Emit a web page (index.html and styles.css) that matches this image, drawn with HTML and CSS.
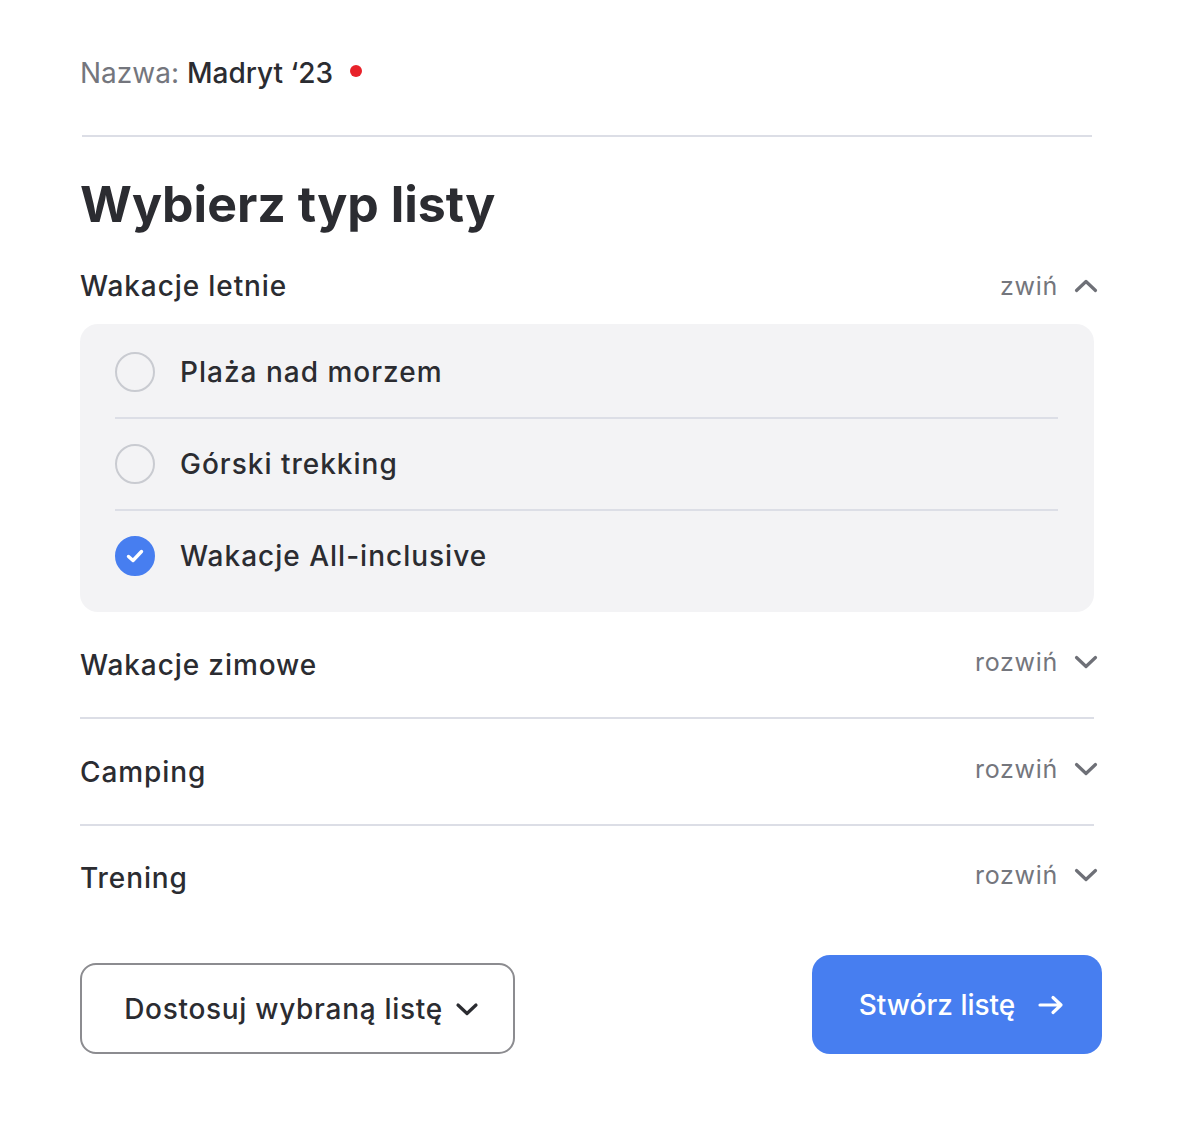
FILE: index.html
```html
<!DOCTYPE html>
<html lang="pl">
<head>
<meta charset="utf-8">
<title>Wybierz typ listy</title>
<link rel="stylesheet" href="styles.css">
</head>
<body>
<div class="page">
  <div class="name-row">
    <span class="name-label">Nazwa:</span>
    <span class="name-value">Madryt ‘23</span>
    <span class="dot"></span>
  </div>
  <div class="divider"></div>
  <h1 class="title">Wybierz typ listy</h1>

  <div class="group open">
    <div class="group-head">
      <span class="group-name">Wakacje letnie</span>
      <span class="toggle">zwiń
        <svg class="chev" width="24" height="14" viewBox="0 0 24 14"><path d="M2.5 11.5 L12 2.5 L21.5 11.5" fill="none" stroke="#6e7077" stroke-width="3.2" stroke-linecap="round" stroke-linejoin="round"/></svg>
      </span>
    </div>
    <div class="panel">
      <div class="option">
        <span class="radio"></span>
        <span class="opt-text">Plaża nad morzem</span>
      </div>
      <div class="option">
        <span class="radio"></span>
        <span class="opt-text">Górski trekking</span>
      </div>
      <div class="option">
        <span class="radio checked">
          <svg width="22" height="18" viewBox="0 0 22 18"><path d="M4.5 9.5 L9 13.5 L17.5 4.5" fill="none" stroke="#fff" stroke-width="3.4" stroke-linecap="round" stroke-linejoin="round"/></svg>
        </span>
        <span class="opt-text">Wakacje All-inclusive</span>
      </div>
    </div>
  </div>

  <div class="group closed">
    <span class="group-name">Wakacje zimowe</span>
    <span class="toggle">rozwiń
      <svg class="chev" width="24" height="14" viewBox="0 0 24 14"><path d="M2.5 2.5 L12 11.5 L21.5 2.5" fill="none" stroke="#6e7077" stroke-width="3.2" stroke-linecap="round" stroke-linejoin="round"/></svg>
    </span>
  </div>
  <div class="group closed">
    <span class="group-name">Camping</span>
    <span class="toggle">rozwiń
      <svg class="chev" width="24" height="14" viewBox="0 0 24 14"><path d="M2.5 2.5 L12 11.5 L21.5 2.5" fill="none" stroke="#6e7077" stroke-width="3.2" stroke-linecap="round" stroke-linejoin="round"/></svg>
    </span>
  </div>
  <div class="group closed last">
    <span class="group-name">Trening</span>
    <span class="toggle">rozwiń
      <svg class="chev" width="24" height="14" viewBox="0 0 24 14"><path d="M2.5 2.5 L12 11.5 L21.5 2.5" fill="none" stroke="#6e7077" stroke-width="3.2" stroke-linecap="round" stroke-linejoin="round"/></svg>
    </span>
  </div>

  <div class="actions">
    <button class="btn-outline">Dostosuj wybraną listę
      <svg width="24" height="14" viewBox="0 0 24 14"><path d="M3 3 L12 11.5 L21 3" fill="none" stroke="#2b2c31" stroke-width="3.2" stroke-linecap="round" stroke-linejoin="round"/></svg>
    </button>
    <button class="btn-primary">Stwórz listę
      <svg width="28" height="20" viewBox="0 0 28 20"><path d="M3 10 H24 M16 2.5 L24 10 L16 17.5" fill="none" stroke="#fff" stroke-width="3.2" stroke-linecap="round" stroke-linejoin="round"/></svg>
    </button>
  </div>
</div>
</body>
</html>
```
FILE: styles.css
```css
* { box-sizing: border-box; }
html, body { margin: 0; padding: 0; background: #fff; }
body {
  font-family: Inter, "Noto Sans", "DejaVu Sans", sans-serif;
  color: #2b2c31;
}
.page {
  width: 1182px;
  padding: 53px 88px 0 80px;
}
.name-row {
  display: flex;
  align-items: center;
  height: 40px;
  font-size: 28px;
}
.name-label { color: #74767d; margin-right: 8px; }
.name-value { color: #2b2c31; font-weight: 500; }
.dot {
  width: 12px; height: 12px; border-radius: 50%;
  background: #e8222a;
  margin-left: 17px;
  margin-top: -4px;
}
.divider {
  height: 2px;
  background: #dcdee6;
  margin: 42px 2px 0 2px;
}
.title {
  margin: 35px 0 0 0;
  font-size: 50px;
  line-height: 64px;
  font-weight: 700;
  letter-spacing: 0;
}
.group-name {
  font-size: 28px; font-weight: 500; color: #2b2c31;
  letter-spacing: 0.9px;
}
.toggle {
  display: flex; align-items: center; gap: 16px;
  font-size: 25px; color: #74767d;
  letter-spacing: 0.7px;
  margin-right: -4px;
}
.group-head {
  display: flex; justify-content: space-between; align-items: center;
  height: 56px;
  margin-top: 22px;
}
.panel {
  margin-top: 10px;
  background: #f3f3f5;
  border-radius: 18px;
  padding: 3px 36px 11px 35px;
}
.option {
  display: flex; align-items: center;
  height: 92px;
  border-bottom: 2px solid #dcdee6;
  gap: 25px;
}
.option:last-child { border-bottom: none; height: 90px; }
.radio {
  width: 40px; height: 40px; border-radius: 50%;
  border: 2px solid #c9cbd1;
  display: flex; align-items: center; justify-content: center;
  flex: none;
}
.radio.checked { background: #477ef0; border-color: #477ef0; }
.opt-text { font-size: 28px; font-weight: 500; letter-spacing: 1px; }
.group.closed {
  display: flex; justify-content: space-between; align-items: center;
  height: 107px;
  border-bottom: 2px solid #dcdee6;
}
.group.closed .toggle { margin-top: -6px; }
.group.closed.last { border-bottom: none; height: 104px; }
.actions {
  display: flex; justify-content: space-between; align-items: flex-end;
  margin-top: 25px;
  margin-right: -8px;
}
.btn-outline {
  font-family: inherit;
  width: 435px; height: 91px;
  border: 2px solid #8c8c90;
  border-radius: 16px;
  background: #fff;
  color: #2b2c31;
  font-size: 28px; font-weight: 500;
  letter-spacing: 0.7px;
  display: flex; align-items: center; justify-content: center; gap: 12px;
  padding: 0 0 0 8px;
}
.btn-primary {
  font-family: inherit;
  width: 290px; height: 99px;
  border: none;
  border-radius: 18px;
  background: #477ef0;
  color: #fff;
  font-size: 28px; font-weight: 500;
  display: flex; align-items: center; justify-content: center; gap: 22px;
  padding: 0 0 0 10px;
}
```
